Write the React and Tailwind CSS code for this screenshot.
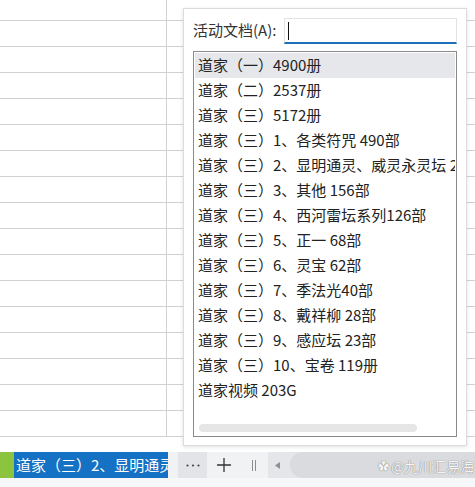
import React from 'react';

const docs = [
  '道家（一）4900册',
  '道家（二）2537册',
  '道家（三）5172册',
  '道家（三）1、各类符咒 490部',
  '道家（三）2、显明通灵、威灵永灵坛 2000部',
  '道家（三）3、其他 156部',
  '道家（三）4、西河雷坛系列126部',
  '道家（三）5、正一 68部',
  '道家（三）6、灵宝 62部',
  '道家（三）7、季法光40部',
  '道家（三）8、戴祥柳 28部',
  '道家（三）9、感应坛 23部',
  '道家（三）10、宝卷 119册',
  '道家视频 203G',
];

const font = { fontFamily: '"Noto Sans CJK SC", "Noto Sans", sans-serif' };

function GridRow({ h }) {
  return (
    <div className={`flex border-b border-[#cfd1d4] ${h}`}>
      <div className="w-[167px] border-r border-[#cfd1d4]" />
      <div className="flex-1" />
    </div>
  );
}

export default function App() {
  const rows = Array.from({ length: 16 });

  return (
    <div className="relative w-[475px] h-[487px] overflow-hidden bg-white" style={font}>
      {/* sheet grid */}
      <div className="flex flex-col h-[452px] overflow-hidden">
        <GridRow h="h-[21px] shrink-0" />
        {rows.map((_, i) => (
          <GridRow key={i} h="h-[26px] shrink-0" />
        ))}
      </div>

      {/* sheet tabs bar */}
      <div className="flex items-stretch h-[26px] bg-[#f1f2f4]">
        <div className="w-[14px] bg-[#8cc43f]" />
        <div className="w-[154px] bg-[#1471c4] text-white text-[15px] leading-[25px] pl-[2px] whitespace-nowrap overflow-hidden">
          道家（三）2、显明通灵、威灵永灵坛
        </div>
        <div className="w-[10px]" />
        <div className="w-[29px] bg-[#e2e4e7] flex items-center justify-center">
          <svg width="14" height="3" viewBox="0 0 14 3">
            <circle cx="1.5" cy="1.5" r="1.1" fill="#444" />
            <circle cx="7" cy="1.5" r="1.1" fill="#444" />
            <circle cx="12.5" cy="1.5" r="1.1" fill="#444" />
          </svg>
        </div>
        <div className="w-[33px] flex items-center justify-center">
          <svg width="14" height="14" viewBox="0 0 14 14">
            <path d="M7 0v14M0 7h14" stroke="#333" strokeWidth="1.3" />
          </svg>
        </div>
        <div className="w-[28px] flex items-center justify-center gap-[2px]">
          <div className="w-px h-[11px] bg-[#8a8d91]" />
          <div className="w-px h-[11px] bg-[#8a8d91]" />
        </div>
        <div className="flex-1 bg-[#e4e6e9] flex items-center pl-[7px]">
          <svg width="5" height="7" viewBox="0 0 5 7">
            <path d="M5 0v7L0 3.5z" fill="#8d9094" />
          </svg>
          <div className="ml-[10px] flex-1 h-[26px] rounded-l-full bg-[#d9dbdf]" />
        </div>
      </div>
      <div className="h-[9px] bg-[#f6f7f8]" />

      {/* watermark */}
      <div className="absolute left-[378px] top-[456px] flex items-center gap-[2px] text-[#f4f4f4] text-[14px] [text-shadow:0_0_1px_#8a8a8a,0_0_1px_#8a8a8a]">
        <span className="text-[11px]">✿</span>
        <span>@九川汇易海</span>
      </div>

      {/* active document popup */}
      <div className="absolute left-[183px] top-[8px] w-[284px] h-[438px] bg-white border border-[#dcdcdc] shadow-[0_1px_4px_rgba(0,0,0,0.12)] px-[9px] pt-[9px]">
        <div className="flex items-center gap-[8px] h-[26px]">
          <span className="text-[15px] leading-[24px] pb-[2px] text-[#333] whitespace-nowrap">活动文档(A):</span>
          <div className="flex-1 h-[26px] border border-[#e3e3e3] border-b-2 border-b-[#1d6fb8] flex items-center pl-[3px]">
            <div className="w-px h-[18px] bg-[#111]" />
          </div>
        </div>
        <div className="mt-[7px] h-[386px] border border-[#8a8a8a] p-px flex flex-col">
          <div className="flex-1 overflow-hidden">
            {docs.map((d, i) => (
              <div
                key={d}
                className={`h-[25px] leading-[23px] pb-[2px] pl-[3px] text-[15px] text-[#222] whitespace-nowrap overflow-hidden ${
                  i === 0 ? 'bg-[#e6e7ea]' : ''
                }`}
              >
                {d}
              </div>
            ))}
          </div>
          <div className="h-[8px] w-[218px] ml-[4px] mb-[3px] rounded-full bg-[#e6e6e6]" />
        </div>
      </div>
    </div>
  );
}
